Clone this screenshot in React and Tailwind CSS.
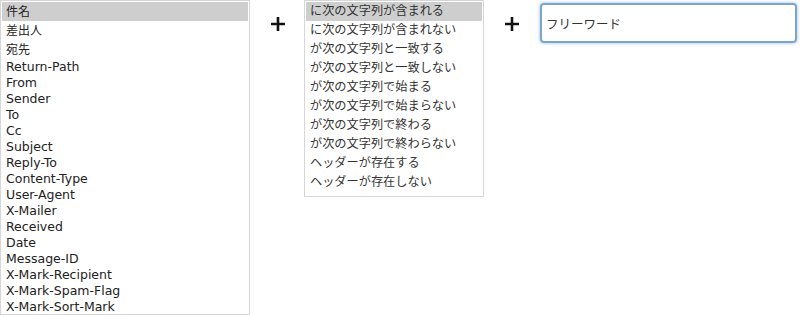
import React from "react";

const fields = [
  { label: "件名", jp: true },
  { label: "差出人", jp: true },
  { label: "宛先", jp: true },
  { label: "Return-Path" },
  { label: "From" },
  { label: "Sender" },
  { label: "To" },
  { label: "Cc" },
  { label: "Subject" },
  { label: "Reply-To" },
  { label: "Content-Type" },
  { label: "User-Agent" },
  { label: "X-Mailer" },
  { label: "Received" },
  { label: "Date" },
  { label: "Message-ID" },
  { label: "X-Mark-Recipient" },
  { label: "X-Mark-Spam-Flag" },
  { label: "X-Mark-Sort-Mark" },
];

const conditions = [
  "に次の文字列が含まれる",
  "に次の文字列が含まれない",
  "が次の文字列と一致する",
  "が次の文字列と一致しない",
  "が次の文字列で始まる",
  "が次の文字列で始まらない",
  "が次の文字列で終わる",
  "が次の文字列で終わらない",
  "ヘッダーが存在する",
  "ヘッダーが存在しない",
];

function Plus() {
  return (
    <svg width="14" height="14" viewBox="0 0 14 14" className="shrink-0">
      <path d="M7 0v14M0 7h14" stroke="#111" strokeWidth="2.6" />
    </svg>
  );
}

export default function App() {
  return (
    <div
      className="w-[800px] h-[315px] bg-white flex items-start text-[12px] text-[#222]"
      style={{ fontFamily: '"DejaVu Sans", "Noto Sans CJK JP", sans-serif' }}
    >
      {/* header field list */}
      <div className="w-[250px] h-[315px] border border-[#d6d6d6] pt-px px-px overflow-hidden">
        {fields.map((f, i) => (
          <div
            key={f.label}
            className={
              (f.jp ? "h-[19px] leading-[20px] text-[12px] " : "h-[16px] leading-[16px] text-[12.5px] ") +
              "pl-[4px] whitespace-nowrap " +
              (i === 0 ? "bg-[#cecece]" : "")
            }
          >
            {f.label}
          </div>
        ))}
      </div>

      <div className="w-[54px] pt-[17px] flex justify-center pl-[1px]">
        <Plus />
      </div>

      {/* condition list */}
      <div className="w-[180px] h-[197px] border border-[#d6d6d6] pt-px px-px">
        {conditions.map((c, i) => (
          <div
            key={c}
            className={
              "h-[19px] leading-[19px] pl-[4px] whitespace-nowrap text-[#333] text-[12.2px] " +
              (i === 0 ? "bg-[#cecece]" : "")
            }
          >
            {c}
          </div>
        ))}
      </div>

      <div className="w-[56px] pt-[17px] flex justify-center">
        <Plus />
      </div>

      {/* free word */}
      <div className="pt-[3px]">
        <input
          defaultValue="フリーワード"
          className="w-[257px] h-[40px] border-2 border-[#7ba6cb] rounded-[4px] pl-[4px] text-[12.5px] text-[#333] outline-none shadow-[0_0_3px_1px_rgba(123,166,203,0.45)]"
          style={{ fontFamily: '"DejaVu Sans", "Noto Sans CJK JP", sans-serif' }}
        />
      </div>
    </div>
  );
}
